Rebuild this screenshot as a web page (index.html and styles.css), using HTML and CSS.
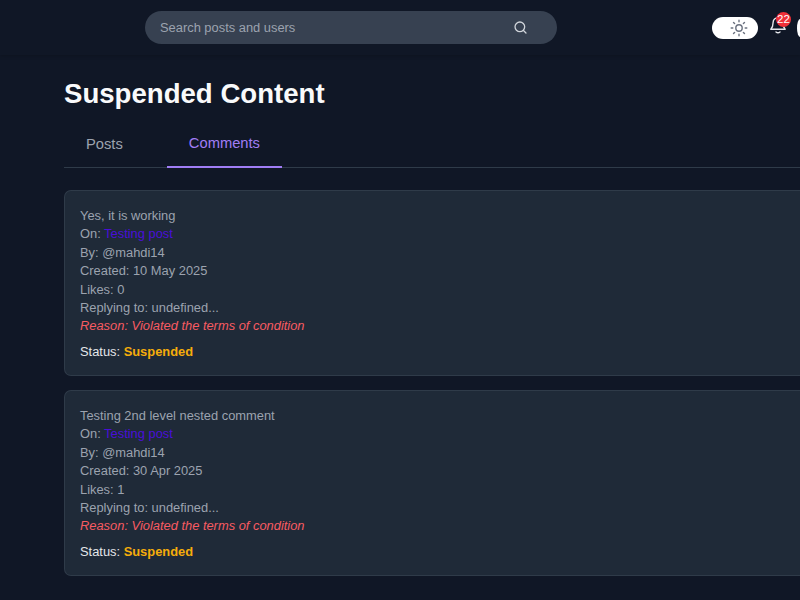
FILE: index.html
```html
<!DOCTYPE html>
<html lang="en">
<head>
    <meta charset="UTF-8">
    <meta name="viewport" content="width=device-width, initial-scale=1.0">
    <title>Suspended Content</title>
    <link rel="stylesheet" href="styles.css">
</head>
<body>
    <header class="navbar">
        <form class="search-bar">
            <input type="text" class="search-input" placeholder="Search posts and users">
            <svg class="search-icon" viewBox="0 0 14 14" fill="none" stroke="currentColor" stroke-width="1.4" stroke-linecap="round">
                <circle cx="6.3" cy="6.3" r="5.2"/>
                <path d="M10.2 10.2L12.9 12.9"/>
            </svg>
        </form>
        <div class="theme-toggle">
            <svg class="sun-icon" viewBox="0 0 18 18" fill="none" stroke="currentColor" stroke-width="1.4" stroke-linecap="round">
                <circle cx="9" cy="9" r="3.2"/>
                <path d="M9 1.200v1.600M9 15.200v1.600M1.200 9h1.600M15.200 9h1.600M3.500 3.500l1.100 1.100M13.400 13.400l1.100 1.100M3.500 14.500l1.100-1.100M13.400 4.600l1.100-1.100"/>
            </svg>
        </div>
        <div class="notifications">
            <svg class="bell-icon" viewBox="0 0 16 18" fill="none" stroke="currentColor" stroke-width="1.4" stroke-linecap="round" stroke-linejoin="round">
                <path d="M.8 13.200h14.400c-1.600-1.600-2.300-3.300-2.300-6.700a4.900 4.900 0 0 0-9.800 0c0 3.400-.7 5.100-2.300 6.700z"/>
                <path d="M6 16q2 1.600 4 0"/>
            </svg>
            <span class="badge">22</span>
        </div>
        <div class="avatar"></div>
    </header>

    <main class="container">
        <h1>Suspended Content</h1>
        <nav class="tabs">
            <button class="tab">Posts</button>
            <button class="tab active">Comments</button>
        </nav>

        <div class="card">
            <p>Yes, it is working</p>
            <p>On: <a href="#" class="post-link">Testing post</a></p>
            <p>By: @mahdi14</p>
            <p>Created: 10 May 2025</p>
            <p>Likes: 0</p>
            <p>Replying to: undefined...</p>
            <p class="reason">Reason: Violated the terms of condition</p>
            <p class="status">Status: <strong>Suspended</strong></p>
        </div>

        <div class="card">
            <p>Testing 2nd level nested comment</p>
            <p>On: <a href="#" class="post-link">Testing post</a></p>
            <p>By: @mahdi14</p>
            <p>Created: 30 Apr 2025</p>
            <p>Likes: 1</p>
            <p>Replying to: undefined...</p>
            <p class="reason">Reason: Violated the terms of condition</p>
            <p class="status">Status: <strong>Suspended</strong></p>
        </div>
    </main>
</body>
</html>
```
FILE: styles.css
```css
:root {
    --background: #101726;
    --card-background: #1f2a38;
    --border-color: #2f3b49;
    --input-background: #374151;
    --text-color: #9ca3af;
    --primary-color: #a07df5;
}

* {
    box-sizing: border-box;
}

body {
    margin: 0;
    height: 600px;
    overflow: hidden;
    background-color: var(--background);
    color: var(--text-color);
    font-family: "Liberation Sans", Arial, sans-serif;
    font-size: 12.88px;
    line-height: 18.4px;
}

.navbar {
    display: flex;
    align-items: center;
    height: 55px;
    padding-left: 145px;
    box-shadow: 0 1px 4px rgba(0, 0, 0, 0.2);
}

.search-bar {
    display: flex;
    flex-shrink: 0;
    align-items: center;
    width: 412px;
    height: 33px;
    padding: 0 30px 0 15px;
    border-radius: 17px;
    background-color: var(--input-background);
}

.search-input {
    flex: 1;
    padding: 2px 0 0;
    border: none;
    outline: none;
    background: transparent;
    color: #f3f4f6;
    font: inherit;
}

.search-input::placeholder {
    color: #9ca3af;
}

.search-icon {
    width: 13px;
    height: 13px;
    color: #d1d5db;
}

.theme-toggle {
    display: flex;
    flex-shrink: 0;
    align-items: center;
    width: 46px;
    height: 22px;
    margin-left: 155px;
    padding-left: 18px;
    border-radius: 11px;
    background-color: #ffffff;
}

.sun-icon {
    width: 18px;
    height: 18px;
    color: #6b7280;
}

.notifications {
    position: relative;
    flex-shrink: 0;
    width: 16px;
    height: 18px;
    margin: -5px 0 0 12px;
    color: #e5e7eb;
}

.bell-icon {
    display: block;
    width: 16px;
    height: 18px;
}

.badge {
    position: absolute;
    top: -4px;
    left: 6px;
    width: 15px;
    height: 15px;
    border-radius: 50%;
    background-color: #ef3038;
    color: #ffffff;
    font-size: 11.5px;
    line-height: 15px;
    text-align: center;
}

/* only the left edge of the avatar fits in the bar */
.avatar {
    width: 3px;
    height: 18px;
    margin-left: 11px;
    border-radius: 3px 0 0 3px / 9px 0 0 9px;
    background-color: #ffffff;
}

.container {
    padding: 22px 0 0 64px;
}

h1 {
    margin: 0;
    color: #f9fafb;
    font-size: 27.6px;
    line-height: 34px;
}

.tabs {
    display: flex;
    height: 47px;
    margin: 10px 0 22px;
    border-bottom: 1px solid var(--border-color);
}

.tab {
    height: 47px;
    padding: 0 22px 2px;
    border: none;
    background: none;
    color: var(--text-color);
    font-family: inherit;
    font-size: 14.72px;
    cursor: pointer;
}

.tab.active {
    margin-left: 22px;
    border-bottom: 2px solid var(--primary-color);
    color: var(--primary-color);
}

.card {
    height: 186px;
    margin-bottom: 14px;
    padding: 16px 15px 14px;
    border: 1px solid var(--border-color);
    border-right: none;
    border-radius: 7px 0 0 7px;
    background-color: var(--card-background);
}

.card p {
    margin: 0;
}

.post-link {
    color: #4a0fd8;
    text-decoration: none;
}

.card .reason {
    color: #f85b62;
    font-style: italic;
}

.card .status {
    margin-top: 7px;
    color: #e5e7eb;
}

.status strong {
    color: #f5ad0b;
}
```
